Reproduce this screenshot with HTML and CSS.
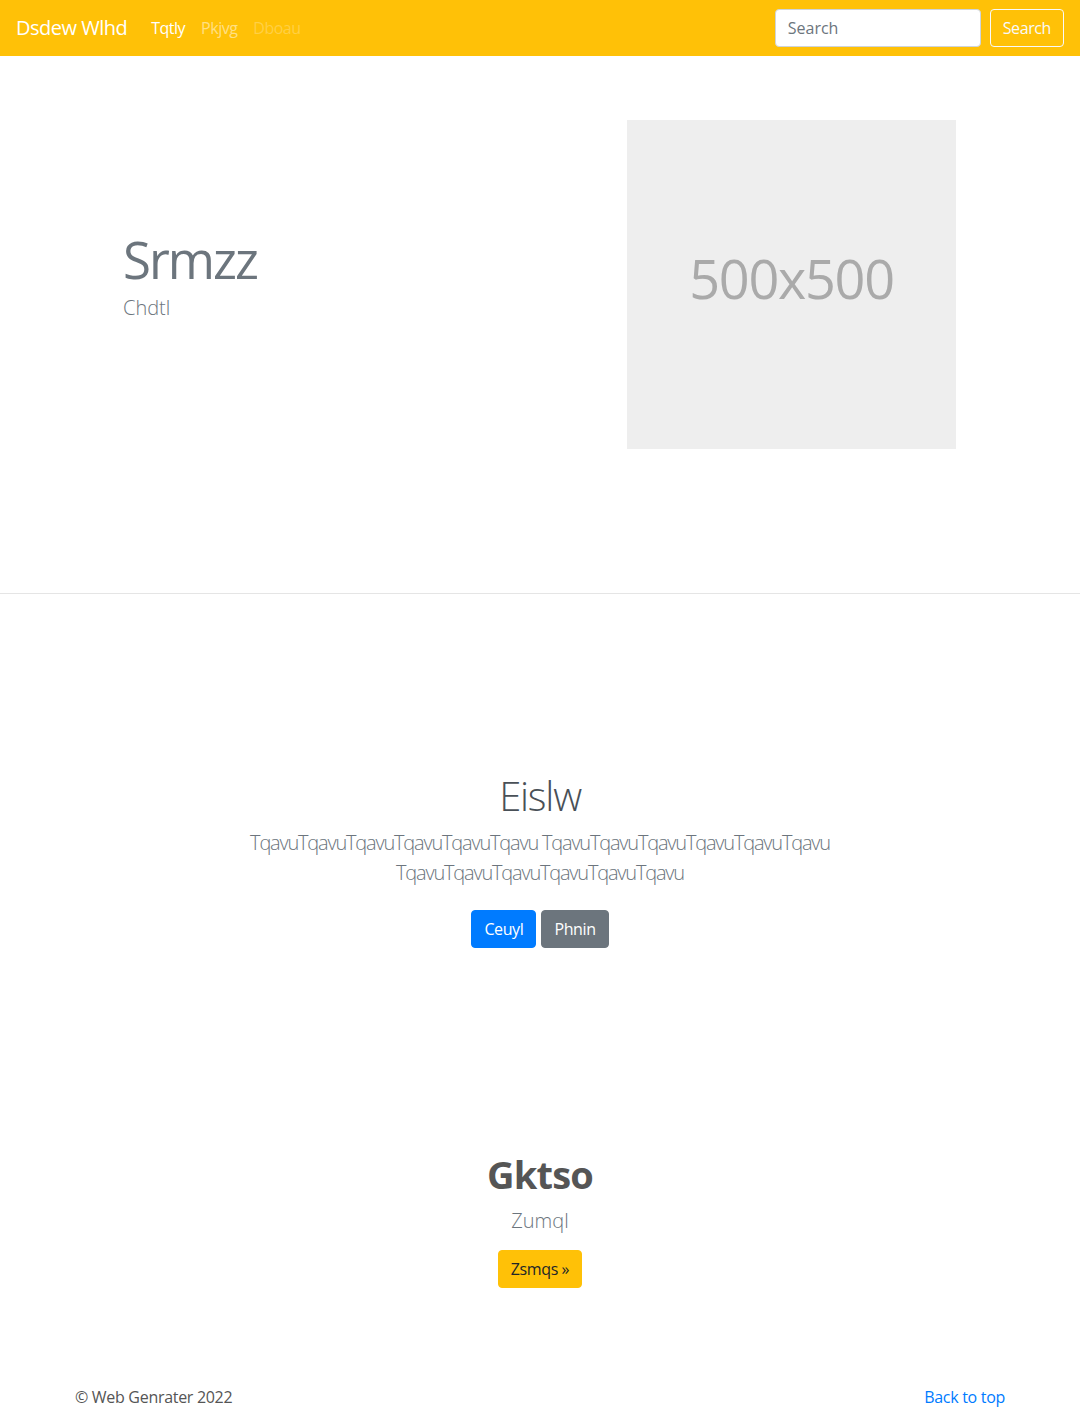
FILE: index.html
```html
<!DOCTYPE html>
<html lang="en">
<head>
<meta charset="utf-8">
<title>Dsdew Wlhd</title>
<link rel="stylesheet" href="styles.css">
</head>
<body>
<nav class="navbar">
  <a class="brand" href="#">Dsdew Wlhd</a>
  <ul class="nav-links">
    <li><a class="nav-link active" href="#">Tqtly</a></li>
    <li><a class="nav-link" href="#">Pkjvg</a></li>
    <li><a class="nav-link disabled" href="#">Dboau</a></li>
  </ul>
  <form class="search-form">
    <input class="search-input" type="text" placeholder="Search">
    <button class="btn btn-outline-light" type="button">Search</button>
  </form>
</nav>

<section class="hero">
  <div class="container hero-inner">
    <div class="hero-text">
      <h1 class="hero-title">Srmzz</h1>
      <p class="hero-lead">Chdtl</p>
    </div>
    <div class="placeholder">500x500</div>
  </div>
</section>

<section class="intro">
  <div class="container center">
    <h1 class="intro-title">Eislw</h1>
    <p class="lead intro-lead">TqavuTqavuTqavuTqavuTqavuTqavu TqavuTqavuTqavuTqavuTqavuTqavu TqavuTqavuTqavuTqavuTqavuTqavu</p>
    <div class="btn-row">
      <a class="btn btn-primary" href="#">Ceuyl</a>
      <a class="btn btn-secondary" href="#">Phnin</a>
    </div>
  </div>
</section>

<section class="feature">
  <div class="container center">
    <h1 class="feature-title">Gktso</h1>
    <p class="lead feature-lead">Zumql</p>
    <a class="btn btn-warning" href="#">Zsmqs &raquo;</a>
  </div>
</section>

<footer class="footer">
  <div class="container footer-inner">
    <p class="copy">&copy; Web Genrater 2022</p>
    <a class="back-top" href="#">Back to top</a>
  </div>
</footer>
</body>
</html>
```
FILE: styles.css
```css
* { box-sizing: border-box; }
html, body { margin: 0; padding: 0; }
body {
  font-family: "Open Sans", "Noto Sans", "Liberation Sans", sans-serif;
  font-size: 16px;
  line-height: 1.5;
  color: #212529;
  background: #fff;
}
a { text-decoration: none; }

.navbar {
  height: 56px;
  background: #ffc107;
  display: flex;
  align-items: center;
  padding: 0 16px;
}
.brand {
  color: #fff;
  font-size: 20px;
  line-height: 30px;
  margin-right: 16px;
  letter-spacing: -0.5px;
}
.nav-links {
  list-style: none;
  margin: 0;
  padding: 0;
  display: flex;
}
.nav-link {
  display: block;
  padding: 8px;
  font-size: 16px;
  color: rgba(255,255,255,0.5);
  letter-spacing: -0.5px;
}
.nav-link.active { color: #fff; }
.nav-link.disabled { color: rgba(255,255,255,0.25); }
.search-form {
  margin-left: auto;
  display: flex;
  align-items: center;
}
.search-input {
  width: 206px;
  height: 38px;
  padding: 6px 12px;
  font-family: inherit;
  font-size: 16px;
  color: #495057;
  background: #fff;
  border: 1px solid #ced4da;
  border-radius: 4px;
  margin-right: 9px;
  outline: none;
}
.search-input::placeholder { color: #6c757d; opacity: 1; }

.btn {
  display: inline-block;
  font-family: inherit;
  font-size: 16px;
  line-height: 24px;
  padding: 6px 12px;
  border: 1px solid transparent;
  border-radius: 4px;
  cursor: pointer;
  letter-spacing: -0.4px;
}
.btn-outline-light {
  color: #f8f9fa;
  background: transparent;
  border-color: #f8f9fa;
}
.btn-primary { color: #fff; background: #007bff; border-color: #007bff; }
.btn-secondary { color: #fff; background: #6c757d; border-color: #6c757d; }
.btn-warning { color: #212529; background: #ffc107; border-color: #ffc107; }

.container {
  width: 960px;
  margin: 0 auto;
  padding: 0 15px;
}

.hero {
  padding: 64px 0 144px;
  border-bottom: 1px solid #e5e5e5;
}
.hero-inner {
  display: flex;
  align-items: center;
  padding: 0 64px 0 63px;
}
.hero-text { flex: 1; padding-bottom: 23px; }
.hero-title {
  margin: 0;
  font-size: 51px;
  font-weight: 400;
  line-height: 70px;
  color: #6c757d;
  letter-spacing: -2px;
}
.hero-lead {
  margin: 0;
  font-size: 20px;
  font-weight: 300;
  color: #6c757d;
  line-height: 28px;
}
.placeholder {
  width: 329px;
  height: 329px;
  background: #eee;
  color: #aaa;
  display: flex;
  align-items: center;
  justify-content: center;
  font-size: 54px;
  letter-spacing: -1.3px;
  padding-bottom: 12px;
}

.center { text-align: center; }
.intro { padding-top: 178px; }
.intro-title {
  margin: 0 0 8px;
  font-size: 40px;
  font-weight: 300;
  line-height: 1.2;
  color: #495057;
  letter-spacing: -1.2px;
}
.lead {
  font-size: 20px;
  font-weight: 300;
  line-height: 1.5;
  color: #6c757d;
}
.intro-lead {
  width: 640px;
  margin: 0 auto 22px;
  letter-spacing: -1.2px;
}
.btn-row .btn + .btn { margin-left: 1px; }

.feature { padding-top: 204px; }
.feature-title {
  margin: 0 0 8px;
  font-size: 38px;
  font-weight: 700;
  line-height: 1.2;
  color: #555;
  letter-spacing: -0.8px;
}
.feature-lead { margin: 0 0 14px; }

.footer { padding-top: 97px; padding-bottom: 48px; }
.footer-inner {
  display: flex;
  justify-content: space-between;
  align-items: center;
}
.copy { margin: 0; color: #555; letter-spacing: -0.3px; }
.back-top { color: #007bff; letter-spacing: -0.3px; }
```
